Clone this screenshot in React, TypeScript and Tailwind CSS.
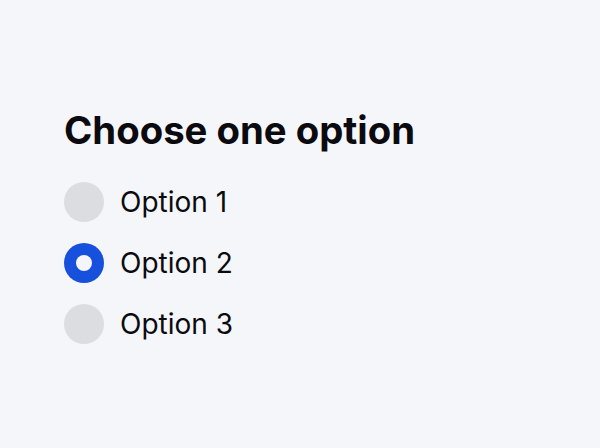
import React, { useState } from 'react';

const options = ['Option 1', 'Option 2', 'Option 3'];

export default function App() {
  const [selected, setSelected] = useState(1);

  return (
    <div className="min-h-screen bg-[#f5f6fa] pl-16 pt-[106px] font-['Inter',sans-serif] text-[#0b0b0f]">
      <h1 className="text-[38.3px] font-bold leading-[48px]">Choose one option</h1>
      <div className="mt-[28px] flex flex-col gap-[21px]">
        {options.map((opt, i) => (
          <button
            key={opt}
            onClick={() => setSelected(i)}
            className="flex items-center gap-4 text-left"
          >
            {selected === i ? (
              <span className="flex h-10 w-10 items-center justify-center rounded-full bg-[#1650dc]">
                <span className="h-4 w-4 rounded-full bg-[#f5f6fa]" />
              </span>
            ) : (
              <span className="h-10 w-10 rounded-full bg-[#dcdde1]" />
            )}
            <span className="text-[28px] leading-10">{opt}</span>
          </button>
        ))}
      </div>
    </div>
  );
}
